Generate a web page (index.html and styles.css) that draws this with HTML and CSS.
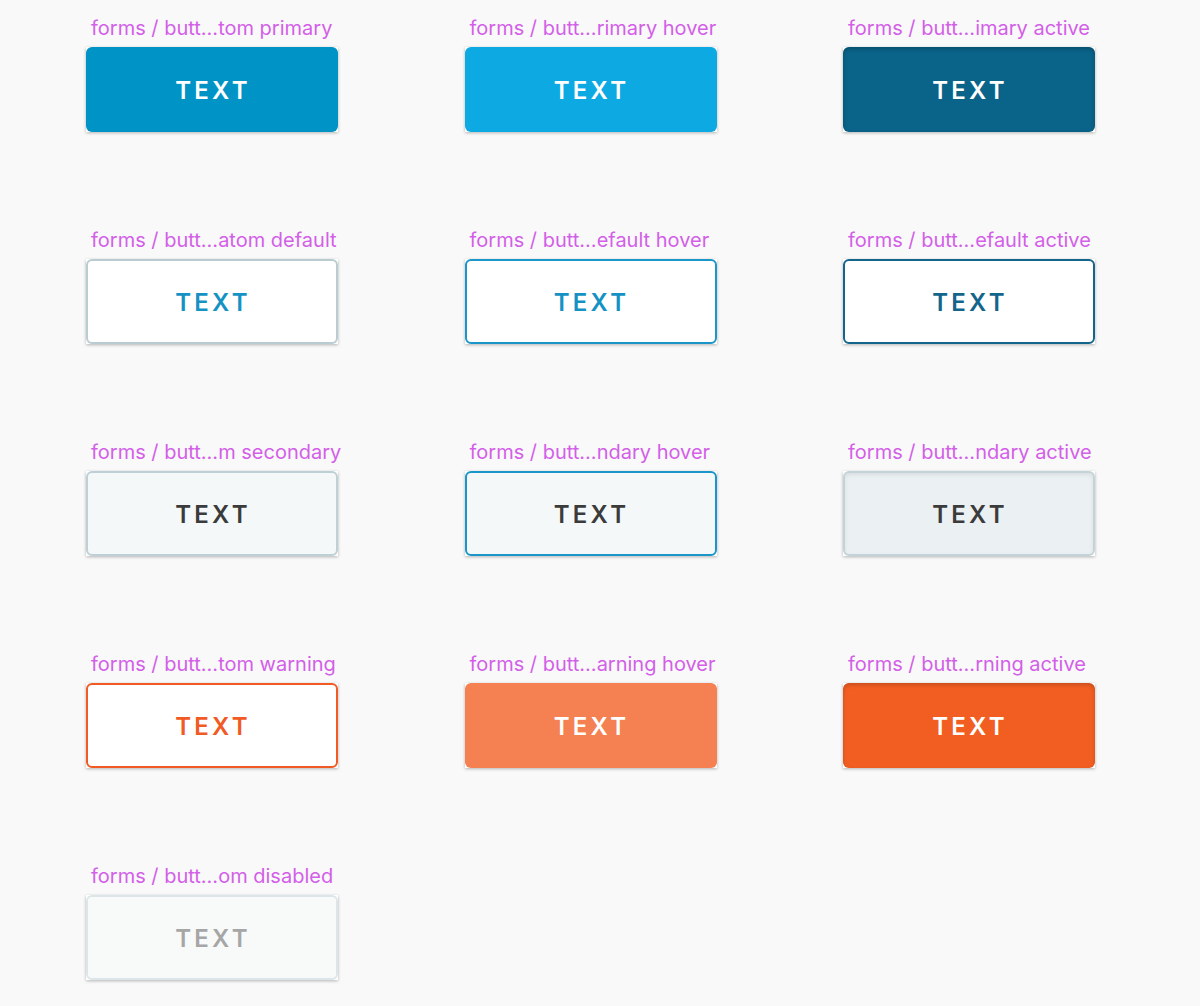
FILE: index.html
```html
<!DOCTYPE html>
<html>
<head>
<meta charset="utf-8">
<link rel="stylesheet" href="styles.css">
</head>
<body>
<div class="board">
  <div class="cell"><div class="label">forms / butt…tom primary</div><div class="frame"><div class="btn primary">TEXT</div></div></div>
  <div class="cell"><div class="label">forms / butt…rimary hover</div><div class="frame"><div class="btn primary-hover">TEXT</div></div></div>
  <div class="cell"><div class="label">forms / butt…imary active</div><div class="frame"><div class="btn primary-active">TEXT</div></div></div>

  <div class="cell"><div class="label">forms / butt…atom default</div><div class="frame"><div class="btn default">TEXT</div></div></div>
  <div class="cell"><div class="label">forms / butt…efault hover</div><div class="frame"><div class="btn default-hover">TEXT</div></div></div>
  <div class="cell"><div class="label">forms / butt…efault active</div><div class="frame"><div class="btn default-active">TEXT</div></div></div>

  <div class="cell"><div class="label">forms / butt…m secondary</div><div class="frame"><div class="btn secondary">TEXT</div></div></div>
  <div class="cell"><div class="label">forms / butt…ndary hover</div><div class="frame"><div class="btn secondary-hover">TEXT</div></div></div>
  <div class="cell"><div class="label">forms / butt…ndary active</div><div class="frame"><div class="btn secondary-active">TEXT</div></div></div>

  <div class="cell"><div class="label">forms / butt…tom warning</div><div class="frame"><div class="btn warning">TEXT</div></div></div>
  <div class="cell"><div class="label">forms / butt…arning hover</div><div class="frame"><div class="btn warning-hover">TEXT</div></div></div>
  <div class="cell"><div class="label">forms / butt…rning active</div><div class="frame"><div class="btn warning-active">TEXT</div></div></div>

  <div class="cell"><div class="label">forms / butt…om disabled</div><div class="frame"><div class="btn disabled">TEXT</div></div></div>
</div>
</body>
</html>
```
FILE: styles.css
```css
html, body {
  margin: 0;
  padding: 0;
  background: #f9f9f9;
}
body {
  width: 1200px;
  height: 1006px;
  overflow: hidden;
}
.board {
  display: grid;
  grid-template-columns: 252px 252px 252px;
  column-gap: 126.5px;
  row-gap: 96px;
  padding: 16px 0 0 86px;
}
.cell {
  display: flex;
  flex-direction: column;
}
.label {
  font-family: Inter, "Open Sans", sans-serif;
  font-size: 20px;
  line-height: 24px;
  color: #d35fe8;
  padding-left: 5px;
  margin-bottom: 7px;
  white-space: nowrap;
}
.frame {
  width: 252px;
  height: 85px;
  background: #fff;
  box-shadow: 0 1px 3px rgba(0, 0, 0, 0.28);
}
.btn {
  box-sizing: border-box;
  width: 100%;
  height: 100%;
  border-radius: 6px;
  display: flex;
  align-items: center;
  justify-content: center;
  font-family: Inter, "Open Sans", sans-serif;
  font-weight: 600;
  font-size: 24px;
  letter-spacing: 3.2px;
  padding-left: 2px;
  padding-top: 2px;
}
.primary { background: #0094c6; color: #fff; }
.primary-hover { background: #0ca9e3; color: #fff; }
.primary-active {
  background: #0a6389;
  color: #fff;
  box-shadow: inset 0 2px 4px rgba(0, 0, 0, 0.22);
}
.default { background: #fff; border: 2px solid #b8ccd2; color: #1592c4; }
.default-hover { background: #fff; border: 2px solid #1a96c8; color: #1592c4; }
.default-active { background: #fff; border: 2px solid #14658b; color: #14658b; }
.secondary { background: #f4f8f9; border: 2px solid #bed0d5; color: #3b3b3b; }
.secondary-hover { background: #f4f8f9; border: 2px solid #1a96c8; color: #3b3b3b; }
.secondary-active {
  background: #ebf0f3;
  border: 2px solid #c4d3d8;
  color: #3b3b3b;
  box-shadow: inset 0 2px 4px rgba(0, 0, 0, 0.08);
}
.warning { background: #fff; border: 2px solid #f15a24; color: #f15a24; }
.warning-hover { background: #f58052; color: #fff; }
.warning-active {
  background: #f25e22;
  color: #fff;
  box-shadow: inset 0 2px 4px rgba(0, 0, 0, 0.18);
}
.disabled { background: #f8fafa; border: 2px solid #dce6e9; color: #a6a6a6; }
```
